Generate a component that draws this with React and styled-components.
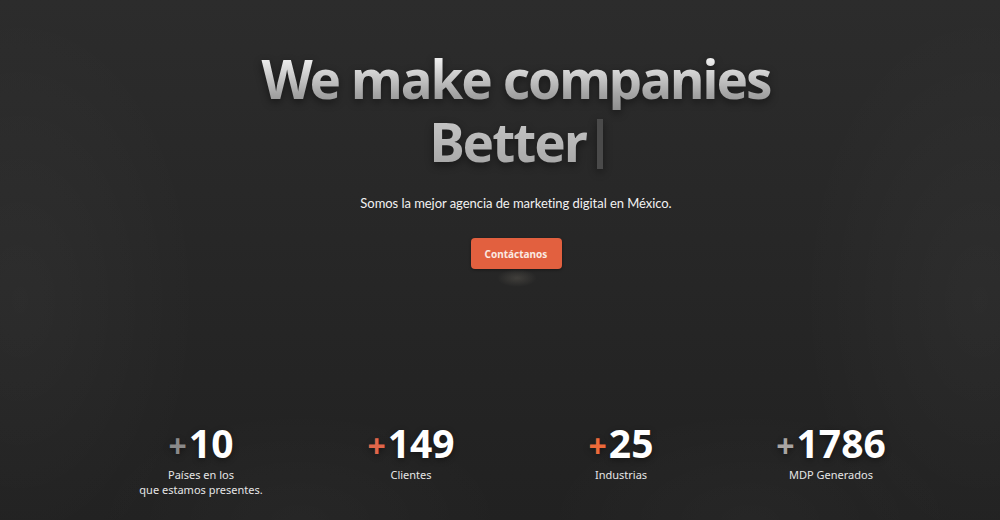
import styled, { createGlobalStyle } from "styled-components";

const GlobalStyle = createGlobalStyle`
  html, body {
    margin: 0;
    padding: 0;
    background: #262626;
  }
  * {
    box-sizing: border-box;
  }
`;

const stats = [
  { value: "10", label: ["Países en los", "que estamos presentes."], plus: "#8a8a8a" },
  { value: "149", label: ["Clientes"], plus: "#e0664a" },
  { value: "25", label: ["Industrias"], plus: "#ec6a3a" },
  { value: "1786", label: ["MDP Generados"], plus: "#a8a4a2" },
];

const Hero = styled.section`
  width: 1000px;
  height: 520px;
  overflow: hidden;
  padding-left: 32px;
  display: flex;
  flex-direction: column;
  align-items: center;
  background:
    radial-gradient(ellipse 260px 420px at 20px 300px, rgba(255, 255, 255, 0.03), transparent 70%),
    radial-gradient(ellipse 260px 420px at 980px 300px, rgba(255, 255, 255, 0.03), transparent 70%),
    radial-gradient(ellipse 300px 160px at 300px 520px, rgba(255, 255, 255, 0.025), transparent 70%),
    radial-gradient(ellipse 300px 160px at 750px 520px, rgba(255, 255, 255, 0.025), transparent 70%),
    linear-gradient(180deg, #2c2c2c 0%, #262626 55%, #212121 100%);
  font-family: "Noto Sans", "DejaVu Sans", sans-serif;
  color: #fff;
`;

const Title = styled.h1`
  margin: 47px 0 0;
  font-size: 53px;
  line-height: 63px;
  font-weight: 700;
  letter-spacing: -2px;
  text-align: center;
  filter: drop-shadow(0 3px 4px rgba(0, 0, 0, 0.45));
`;

const Line = styled.span`
  display: block;
  background: ${(p) =>
    p.$dim
      ? "linear-gradient(180deg, #c4c4c4 20%, #a2a2a2 100%)"
      : "linear-gradient(180deg, #ededed 20%, #a4a4a4 75%, #8f8f8f 100%)"};
  -webkit-background-clip: text;
  background-clip: text;
  color: transparent;
`;

const Cursor = styled.span`
  display: inline-block;
  width: 6px;
  height: 50px;
  margin-left: 11px;
  vertical-align: -7px;
  background: #4a4a4a;
`;

const Subtitle = styled.p`
  margin: 20px 0 0;
  font-family: "Lato", "Noto Sans", sans-serif;
  font-size: 13px;
  line-height: 20px;
  letter-spacing: -0.05px;
  color: #f2f2f2;
`;

const Button = styled.button`
  position: relative;
  margin-top: 25px;
  width: 91px;
  height: 31px;
  border: none;
  border-radius: 4px;
  background: #e2603f;
  color: #fbe9e2;
  font-family: "Noto Sans", sans-serif;
  font-size: 10px;
  font-weight: 700;
  cursor: pointer;
  box-shadow: 0 1px 3px rgba(0, 0, 0, 0.4);

  &::after {
    content: "";
    position: absolute;
    left: 26px;
    top: 31px;
    width: 40px;
    height: 18px;
    border-radius: 50%;
    background: radial-gradient(ellipse, rgba(255, 240, 210, 0.12), transparent 70%);
  }
`;

const StatGrid = styled.div`
  margin-top: auto;
  margin-bottom: 23px;
  display: grid;
  grid-template-columns: repeat(4, 210px);
`;

const Stat = styled.div`
  display: flex;
  flex-direction: column;
  align-items: center;
`;

const Number = styled.div`
  font-size: 39px;
  line-height: 42px;
  font-weight: 700;
  color: #fff;
  text-shadow: 0 2px 6px rgba(0, 0, 0, 0.4);
`;

const Plus = styled.span`
  color: ${(p) => p.$color};
  font-size: 32px;
  margin-right: 2px;
`;

const Label = styled.div`
  font-size: 11px;
  line-height: 15px;
  color: #e6e6e6;
  text-align: center;
`;

export default function App() {
  return (
    <>
      <GlobalStyle />
      <Hero>
        <Title>
          <Line>We make companies</Line>
          <Line $dim>
            Better
            <Cursor />
          </Line>
        </Title>
        <Subtitle>Somos la mejor agencia de marketing digital en México.</Subtitle>
        <Button>Contáctanos</Button>
        <StatGrid>
          {stats.map((s) => (
            <Stat key={s.value}>
              <Number>
                <Plus $color={s.plus}>+</Plus>
                {s.value}
              </Number>
              <Label>
                {s.label.map((l) => (
                  <div key={l}>{l}</div>
                ))}
              </Label>
            </Stat>
          ))}
        </StatGrid>
      </Hero>
    </>
  );
}
